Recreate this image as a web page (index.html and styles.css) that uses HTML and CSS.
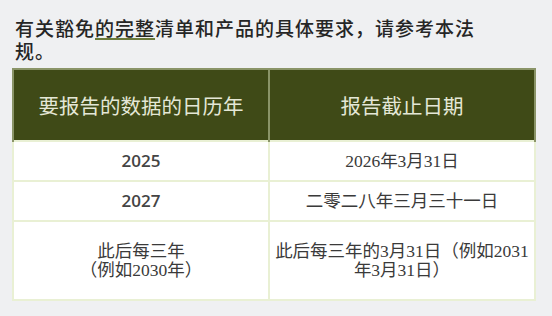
FILE: index.html
```html
<!DOCTYPE html>
<html lang="zh-CN">
<head>
    <meta charset="UTF-8">
    <meta name="viewport" content="width=device-width, initial-scale=1.0">
    <title>报告截止日期</title>
    <link rel="stylesheet" href="styles.css">
</head>
<body>

    <p class="intro">有关豁免<a href="#" class="intro-link">的完整</a>清单和产品的具体要求，请参考本法规。</p>

    <table class="deadline-table">
        <thead>
            <tr>
                <th>要报告的数据的日历年</th>
                <th>报告截止日期</th>
            </tr>
        </thead>
        <tbody>
            <tr>
                <td class="year">2025</td>
                <td>2026年3月31日</td>
            </tr>
            <tr>
                <td class="year">2027</td>
                <td>二零二八年三月三十一日</td>
            </tr>
            <tr class="tall">
                <td>此后每三年<br>（例如2030年）</td>
                <td>此后每三年的3月31日（例如2031年3月31日）</td>
            </tr>
        </tbody>
    </table>

</body>
</html>
```

FILE: styles.css
```css
body {
    margin: 0;
    padding: 16px 0 0 12px;
    background-color: #eff0f2;
    color: #222;
    font-family: "Noto Sans CJK SC", sans-serif;
}

.intro {
    margin: 0 0 6px 3px;
    width: 485px;
    font-size: 19px;
    line-height: 23px;
    letter-spacing: 1px;
    font-weight: 500;
    color: #262626;
}

.intro-link {
    color: inherit;
    text-decoration: underline;
    text-decoration-color: #6b7a3a;
    text-decoration-thickness: 2px;
    text-underline-offset: 2px;
}

.deadline-table {
    width: 524px;
    border-collapse: collapse;
    table-layout: fixed;
    background-color: #fff;
}

.deadline-table th {
    height: 70px;
    padding: 0;
    background-color: #3f4a17;
    color: #e4e7d6;
    font-size: 20.5px;
    font-weight: 400;
    border-top: 2px solid #8a9468;
    border-left: 2px solid #8a9468;
    border-right: 2px solid #8a9468;
}

.deadline-table th:first-child {
    width: 254px;
}

.deadline-table td {
    height: 38px;
    padding: 0 4px;
    text-align: center;
    vertical-align: middle;
    border: 2px solid #e9f0d4;
    font-family: "Liberation Serif", "Noto Sans CJK SC", serif;
    font-size: 17.5px;
    line-height: 18.5px;
    color: #3a3a3a;
}

.deadline-table td.year {
    font-family: "Open Sans", sans-serif;
    font-size: 17px;
    font-weight: 600;
    color: #444;
}

.deadline-table tr.tall td {
    height: 77px;
}
```
